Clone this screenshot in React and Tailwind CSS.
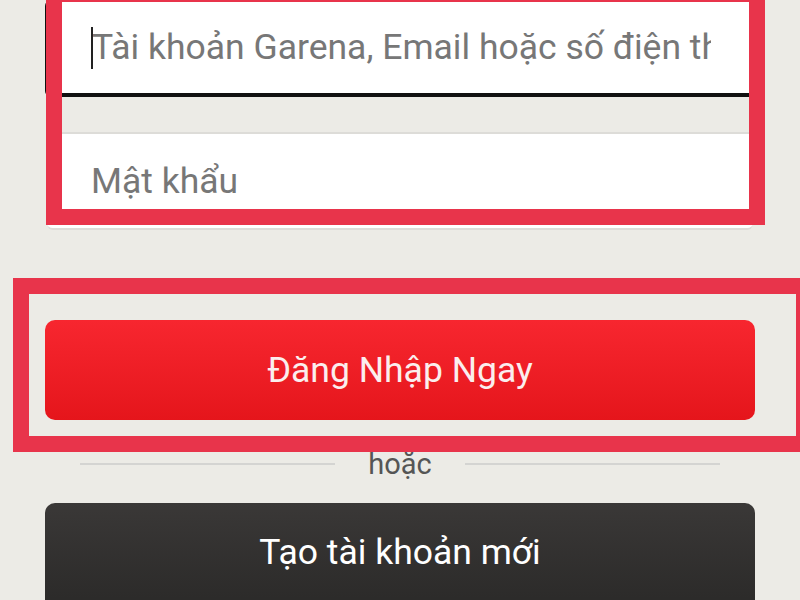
export default function App() {
  return (
    <div className="relative w-[800px] h-[600px] overflow-hidden bg-[#ecebe6] font-['Roboto',sans-serif]">
      <div className="px-[45px]">
        {/* Ô tài khoản */}
        <div className="relative h-[97px] bg-white border-l-[3px] border-b-4 border-[#111] rounded-md flex items-start pl-[44px] pr-[44px]">
          <span className="absolute left-[43px] top-[27px] w-[2px] h-[42px] bg-[#222]" />
          <input
            readOnly
            placeholder="Tài khoản Garena, Email hoặc số điện thoại"
            className="w-full h-[93px] pt-[1px] bg-transparent outline-none text-[35.5px] placeholder-[#777]"
          />
        </div>

        {/* Ô mật khẩu */}
        <div className="mt-[35px] mx-[2px] h-[98px] bg-white border-t-2 border-b-2 border-[#dddcd8] rounded-b-md flex items-start pl-[44px]">
          <input
            readOnly
            placeholder="Mật khẩu"
            className="w-full h-[92px] pt-[2px] bg-transparent outline-none text-[35.5px] placeholder-[#777]"
          />
        </div>

        <button className="block w-[710px] mt-[90px] h-[100px] pt-[2px] rounded-[10px] bg-gradient-to-b from-[#f7262f] to-[#e5151b] text-[#fbeeee] text-[35.5px]">
          Đăng Nhập Ngay
        </button>

        <div className="mt-[24px] px-[35px] flex items-center">
          <div className="flex-1 h-[2px] bg-[#d4d4d2]" />
          <span className="w-[130px] text-center text-[29px] leading-[40px] text-[#555]">hoặc</span>
          <div className="flex-1 h-[2px] bg-[#d4d4d2]" />
        </div>

        <button className="block w-[710px] mt-[19px] h-[110px] rounded-[10px] bg-gradient-to-b from-[#3a3837] to-[#2a2928] text-white text-[35.5px] pb-[10px]">
          Tạo tài khoản mới
        </button>
      </div>

      {/* Khung đỏ chú thích */}
      <div className="absolute left-[46px] top-0 w-[719px] h-[225px] border-[16px] border-t-2 border-[#e8344b]" />
      <div className="absolute left-[13px] top-[278px] w-[799px] h-[174px] border-[16px] border-[#e8344b]" />
    </div>
  )
}
